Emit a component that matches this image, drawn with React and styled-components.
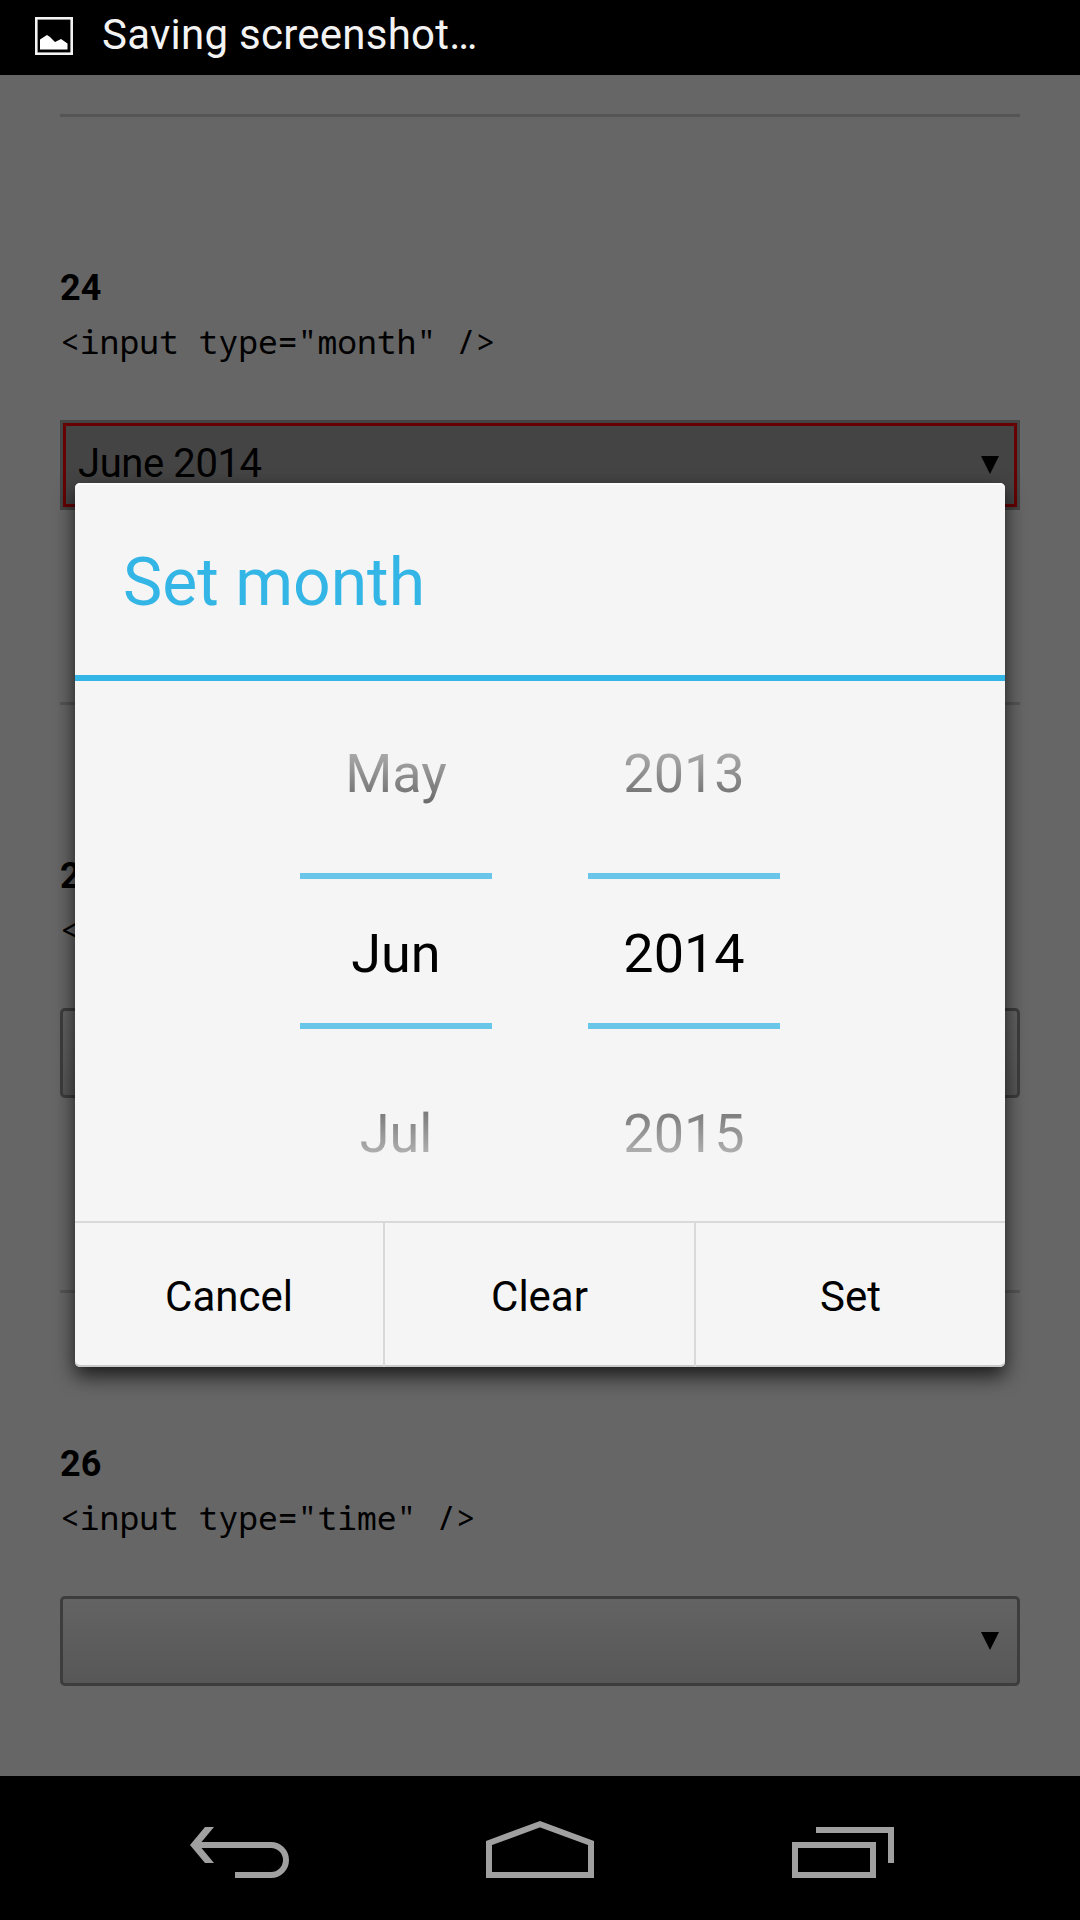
import React from "react";
import styled, { createGlobalStyle, css } from "styled-components";

const GlobalStyle = createGlobalStyle`
  * { box-sizing: border-box; }
  body { margin: 0; background: #000; }
`;

const Screen = styled.div`
  position: relative;
  display: flex;
  flex-direction: column;
  width: 1080px;
  height: 1920px;
  overflow: hidden;
  background: #000;
  font-family: Roboto, "Liberation Sans", sans-serif;
  color: #000;
`;

const StatusBar = styled.header`
  display: flex;
  align-items: center;
  gap: 28px;
  flex: none;
  height: 75px;
  padding: 0 35px 3px;
`;

const StatusText = styled.span`
  padding-bottom: 3px;
  font-size: 42px;
  line-height: 50px;
  letter-spacing: 0.25px;
  color: #f3f3f3;
`;

const Page = styled.main`
  flex: 1;
  min-height: 0;
  overflow: hidden;
  padding: 39px 60px 0;
  background: #666;
`;

const Section = styled.section`
  display: flex;
  flex-direction: column;
  height: 588px;
  padding-top: 150px;
  border-top: 3px solid #555;
`;

const SectionNumber = styled.h2`
  margin: 0;
  font-size: 36px;
  line-height: 42px;
  font-weight: 700;
`;

const Code = styled.code`
  margin-top: 9px;
  font-family: "Droid Sans Mono", "Noto Sans Mono", "DejaVu Sans Mono", monospace;
  font-size: 33px;
  line-height: 48px;
  white-space: pre;
`;

const Field = styled.div`
  display: flex;
  align-items: center;
  justify-content: space-between;
  height: 90px;
  margin-top: 54px;
  padding: 0 18px 0 15px;
  font-size: 40px;
  line-height: 48px;
  letter-spacing: -0.4px;
  border: 3px solid #3d3d3d;
  border-radius: 5px;
  background: linear-gradient(#636363, #575757);
  ${(p) =>
    p.$focused &&
    css`
      border-color: #444;
      border-radius: 0;
      background: #444;
      box-shadow: inset 0 0 0 3px #660000;
    `}
`;

const FieldValue = styled.span`
  padding-bottom: 2px;
`;

const Caret = styled.svg`
  display: block;
  width: 18px;
  height: 18px;
`;

const NavBar = styled.nav`
  display: flex;
  justify-content: center;
  gap: 180px;
  flex: none;
  height: 144px;
`;

const NavIcon = styled.svg`
  display: block;
  width: 120px;
  height: 144px;
  fill: none;
  stroke: #a0a0a0;
  stroke-width: 6;
`;

const Dialog = styled.div`
  position: absolute;
  top: 483px;
  left: 75px;
  display: flex;
  flex-direction: column;
  width: 930px;
  height: 884px;
  border-radius: 5px;
  background: #f5f5f5;
  box-shadow: inset 0 2px 0 #fbfbfb, inset 0 -2px 0 #c9c9c9,
    0 9px 20px rgba(0, 0, 0, 0.75);
`;

const DialogTitle = styled.h1`
  display: flex;
  align-items: center;
  height: 198px;
  margin: 0;
  padding: 6px 48px 0;
  border-bottom: 6px solid #33b5e5;
  font-size: 66px;
  font-weight: 400;
  color: #33b5e5;
`;

const Pickers = styled.div`
  display: flex;
  justify-content: center;
  gap: 96px;
  height: 540px;
  padding: 12px 0;
`;

const Picker = styled.div`
  display: flex;
  flex-direction: column;
  width: 192px;
`;

const Option = styled.div`
  flex: none;
  height: 180px;
  text-align: center;
  font-size: 54px;
  line-height: 64px;
  ${(p) =>
    p.$place === "before" &&
    css`
      padding-top: 49px;
      color: transparent;
      background: linear-gradient(rgba(0, 0, 0, 0), rgba(0, 0, 0, 0.92));
      background-clip: text;
    `}
  ${(p) =>
    p.$place === "current" &&
    css`
      height: 156px;
      padding-top: 43px;
      border-top: 6px solid #6ac6e9;
      border-bottom: 6px solid #6ac6e9;
    `}
  ${(p) =>
    p.$place === "after" &&
    css`
      padding-top: 73px;
      color: transparent;
      background: linear-gradient(rgba(0, 0, 0, 0.92), rgba(0, 0, 0, 0));
      background-clip: text;
    `}
`;

const Actions = styled.div`
  display: grid;
  grid-template-columns: 308px 311px 311px;
  height: 146px;
  border-top: 2px solid #d9d9d9;
`;

const Action = styled.button`
  padding: 2px 0 0;
  border: 0;
  background: none;
  color: #000;
  font-family: inherit;
  font-size: 42px;

  & + & {
    border-left: 2px solid #d9d9d9;
  }
`;

const Picture = styled.svg`
  display: block;
  flex: none;
  width: 39px;
  height: 39px;
  margin-top: 1px;
`;

function PictureIcon() {
  return (
    <Picture viewBox="0 0 39 39">
      <rect x="1.3" y="1.3" width="35.4" height="35.4" fill="none" stroke="#f3f3f3" strokeWidth="2.6" />
      <path d="M5 32.500V22.500l7-4.500 3 2 5 5 6-3 6.500 4.500V32.500z" fill="#fff" />
    </Picture>
  );
}

function FormSection({ number, type, value, focused }) {
  return (
    <Section>
      <SectionNumber>{number}</SectionNumber>
      <Code>{`<input type="${type}" />`}</Code>
      <Field $focused={focused}>
        <FieldValue>{value}</FieldValue>
        <Caret viewBox="0 0 18 18">
          <path d="M0 0h18L9 18z" />
        </Caret>
      </Field>
    </Section>
  );
}

function NumberPicker({ before, current, after }) {
  return (
    <Picker>
      <Option $place="before">{before}</Option>
      <Option $place="current">{current}</Option>
      <Option $place="after">{after}</Option>
    </Picker>
  );
}

export default function App() {
  return (
    <>
      <GlobalStyle />
      <Screen>
        <StatusBar>
          <PictureIcon />
          <StatusText>Saving screenshot…</StatusText>
        </StatusBar>
        <Page>
          <FormSection number="24" type="month" value="June 2014" focused />
          <FormSection number="25" type="week" value="" />
          <FormSection number="26" type="time" value="" />
        </Page>
        <NavBar>
          <NavIcon viewBox="0 0 120 144">
            <path d="M18 69H91a15 15 0 0 1 0 30H55" />
            <path d="M10 69L25 51h9L19 69l15 18h-9z" fill="#a0a0a0" stroke="none" />
          </NavIcon>
          <NavIcon viewBox="0 0 120 144">
            <path d="M9 99V67L60 48.200L111 67V99z" />
          </NavIcon>
          <NavIcon viewBox="0 0 120 144">
            <path d="M15 69H93V99H15zM36 54H111V87" />
          </NavIcon>
        </NavBar>
        <Dialog>
          <DialogTitle>Set month</DialogTitle>
          <Pickers>
            <NumberPicker before="May" current="Jun" after="Jul" />
            <NumberPicker before="2013" current="2014" after="2015" />
          </Pickers>
          <Actions>
            <Action>Cancel</Action>
            <Action>Clear</Action>
            <Action>Set</Action>
          </Actions>
        </Dialog>
      </Screen>
    </>
  );
}
